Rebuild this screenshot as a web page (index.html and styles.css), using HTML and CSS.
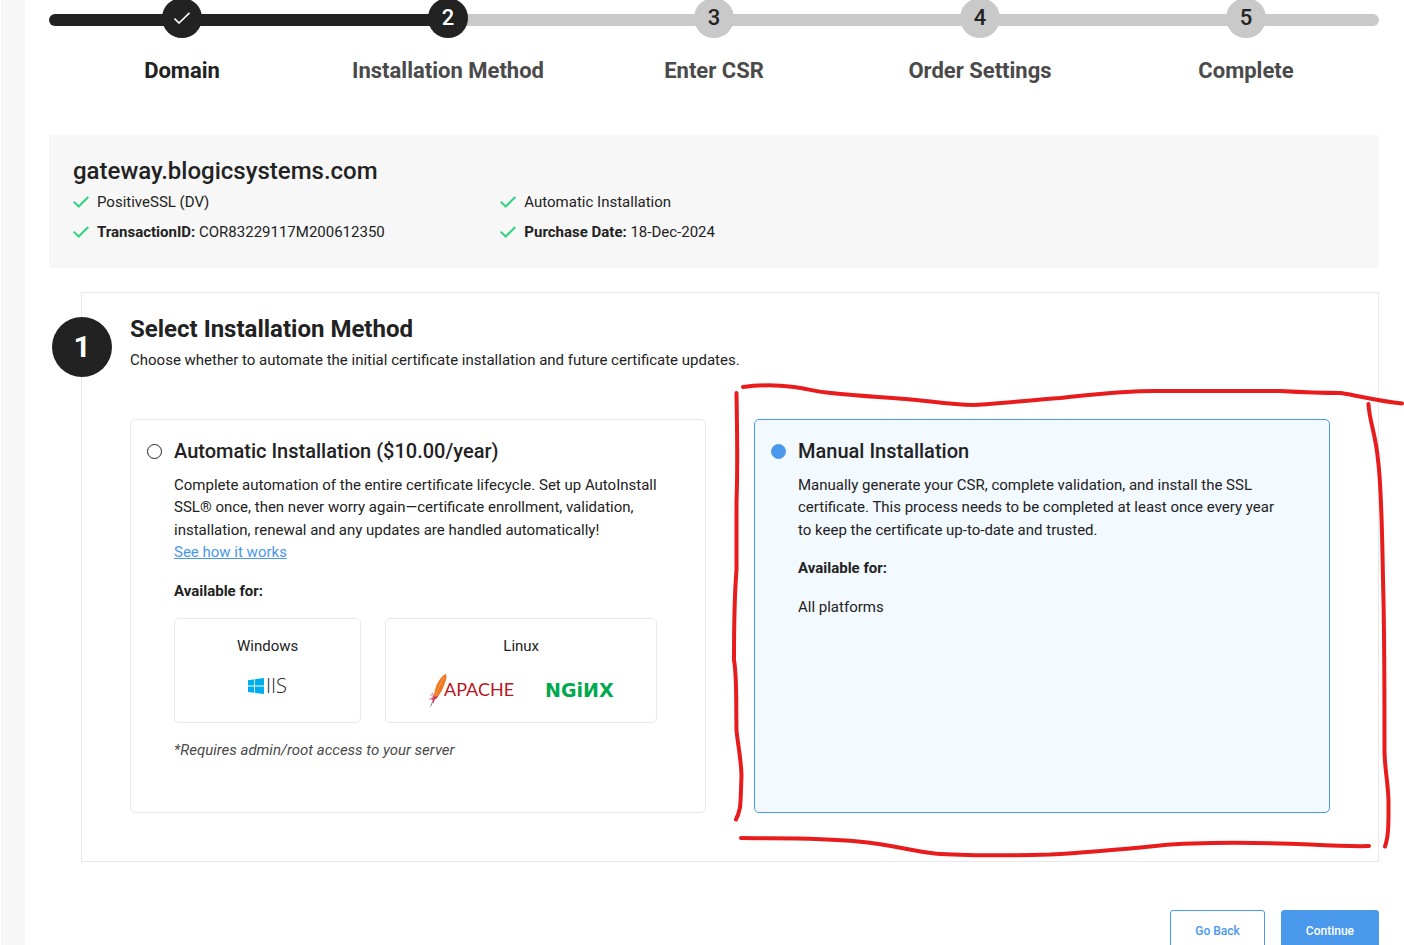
FILE: index.html
```html
<!DOCTYPE html>
<html lang="en">
<head>
  <meta charset="UTF-8" />
  <title>Select Installation Method</title>
  <meta name="viewport" content="width=device-width, initial-scale=1" />
  <link rel="stylesheet" href="styles.css">
</head>
<body>
  <main class="page">

    <ol class="stepper">
      <li class="step done">
        <span class="step-dot">
          <svg width="16" height="12" viewBox="0 0 16 12" aria-hidden="true"><path d="M.5 6.500 5 11 15.500 .8" fill="none" stroke="#fff" stroke-width="1.6"/></svg>
        </span>
        <span class="step-label">Domain</span>
      </li>
      <li class="step active"><span class="step-dot">2</span><span class="step-label">Installation Method</span></li>
      <li class="step"><span class="step-dot">3</span><span class="step-label">Enter CSR</span></li>
      <li class="step"><span class="step-dot">4</span><span class="step-label">Order Settings</span></li>
      <li class="step"><span class="step-dot">5</span><span class="step-label">Complete</span></li>
    </ol>

    <section class="summary">
      <h2>gateway.blogicsystems.com</h2>
      <ul class="summary-list">
        <li><svg class="tick" viewBox="0 0 16 12"><path d="M.7 5.600 5.700 10.500 15.300 1"/></svg><span>PositiveSSL (DV)</span></li>
        <li><svg class="tick" viewBox="0 0 16 12"><path d="M.7 5.600 5.700 10.500 15.300 1"/></svg><span>Automatic Installation</span></li>
        <li><svg class="tick" viewBox="0 0 16 12"><path d="M.7 5.600 5.700 10.500 15.300 1"/></svg><span><b>TransactionID:</b> COR83229117M200612350</span></li>
        <li><svg class="tick" viewBox="0 0 16 12"><path d="M.7 5.600 5.700 10.500 15.300 1"/></svg><span><b>Purchase Date:</b> 18-Dec-2024</span></li>
      </ul>
    </section>

    <form>
      <section class="method">
        <span class="method-number">1</span>
        <h1>Select Installation Method</h1>
        <p>Choose whether to automate the initial certificate installation and future certificate updates.</p>

        <div class="options">
          <div class="option">
            <input type="radio" name="method" id="auto" value="auto" />
            <div class="option-body">
              <label for="auto">Automatic Installation ($10.00/year)</label>
              <p>Complete automation of the entire certificate lifecycle. Set up AutoInstall SSL® once, then never worry again—certificate enrollment, validation, installation, renewal and any updates are handled automatically!<br /><a href="#">See how it works</a></p>
              <p><b>Available for:</b></p>
              <div class="platforms">
                <div class="platform">
                  <span>Windows</span>
                  <div class="logos">
                    <svg width="40" height="24" viewBox="0 0 40 24" role="img" aria-label="IIS">
                      <path fill="#00adef" d="M0 6.200 6.200 5.300V11.500H0zM7 5.200 16 4V11.500H7zM0 12.400H6.200V18.800L0 17.900zM7 12.400H16V20.100L7 18.900z"/>
                      <text class="iis" x="18" y="19">IIS</text>
                    </svg>
                  </div>
                </div>
                <div class="platform wide">
                  <span>Linux</span>
                  <div class="logos">
                    <svg width="85" height="33" viewBox="0 0 85 33" role="img" aria-label="Apache">
                      <path fill="#ee7b23" d="M17 0C13.500 1 9 7 7 12.500 5.500 17 4.800 20 5 23.500L9 22.500C12.500 18 15 12.500 16.500 7.500 17.600 4 18 1.500 17 0z"/>
                      <path fill="none" stroke="#f6a45c" stroke-width=".7" d="M15.500 3C11.500 9 8.500 15 6.800 22"/>
                      <path fill="#cf2848" d="M4.200 20.500 6 23 9.500 21.500 7.500 24.500 6 25 4 30 3.500 25.500 1.500 24 4.500 23.500z"/>
                      <path fill="none" stroke="#cf5b80" stroke-width=".8" d="M1 20 4.500 23M0 25H5M3 18.500 5 23"/>
                      <path fill="none" stroke="#7a6a9a" stroke-width=".9" d="M4 27 1.500 32.500"/>
                      <text class="apache" x="15" y="22">APACHE</text>
                    </svg>
                    <svg width="68" height="33" viewBox="0 0 68 33" role="img" aria-label="Nginx">
                      <text class="nginx" x="-1" y="23">NGiИX</text>
                    </svg>
                  </div>
                </div>
              </div>
              <p class="note">*Requires admin/root access to your server</p>
            </div>
          </div>

          <div class="option selected">
            <input type="radio" name="method" id="manual" value="manual" checked />
            <div class="option-body">
              <label for="manual">Manual Installation</label>
              <p>Manually generate your CSR, complete validation, and install the SSL certificate. This process needs to be completed at least once every year to keep the certificate up-to-date and trusted.</p>
              <p><b>Available for:</b></p>
              <p>All platforms</p>
            </div>
            <!-- hand-drawn marker around the card -->
            <svg class="marker" viewBox="754 419 576 394" preserveAspectRatio="none" aria-hidden="true">
              <path d="M743 387C758 385 778 385 794 387 808 389 817 392 831 393 858 396 881 397 906 399 930 401 950 405 974 405 1000 404 1030 400 1060 398 1090 395 1120 391 1155 391H1280C1298 392 1320 393 1341 393 1360 396 1378 401 1402 403.500"/>
              <path d="M736.500 393C737 430 738 465 736.500 500V570C734 600 734 630 734 660 737 675 736 705 736.500 730 738 745 741 758 741.500 775 741 787 741 797 740 807 739 812 738 815 736 819"/>
              <path d="M1368.500 404C1369 420 1376 435 1378 460 1382 490 1382 540 1383.500 600 1384.500 650 1384.500 700 1384.500 752 1385 770 1388 782 1388.500 800 1388.500 820 1389 835 1385 846"/>
              <path d="M741 837.500C780 838 820 837 858 841 890 844 910 850 935 853 970 856 1010 855 1050 854 1090 852 1120 849 1160 845 1200 841 1270 842 1310 844 1330 845 1350 846 1369 845.500"/>
            </svg>
          </div>
        </div>
      </section>

      <div class="actions">
        <button type="button" class="btn">Go Back</button>
        <button type="submit" class="btn primary">Continue</button>
      </div>
    </form>

  </main>
</body>
</html>
```
FILE: styles.css
```css
* {
  box-sizing: border-box;
}

body {
  margin: 0;
  height: 100vh;
  overflow: hidden;
  background: #fff;
  color: #222;
  font-family: Roboto, "Liberation Sans", sans-serif;
  font-size: 15px;
  line-height: 1.5;
}

h1, h2, p, ul, ol {
  margin: 0;
  padding: 0;
}

ul, ol {
  list-style: none;
}

b {
  font-weight: 700;
}

a {
  color: #4a98eb;
}

.page {
  margin-left: 1px;
  padding: 0 25px 24px 24px;
  border-left: 24px solid #f7f7f7;
}

/* progress steps */
.stepper {
  position: relative;
  display: flex;
  margin-top: -2px;
}

.stepper::before {
  content: "";
  position: absolute;
  top: 16px;
  left: 0;
  right: 0;
  height: 12px;
  border-radius: 6px;
  background: linear-gradient(90deg, #222 30%, #c9c9c9 30%);
}

.step {
  position: relative;
  flex: 1;
  display: flex;
  flex-direction: column;
  align-items: center;
  gap: 16px;
}

.step-dot {
  display: flex;
  align-items: center;
  justify-content: center;
  width: 40px;
  height: 40px;
  padding-bottom: 2px;
  border-radius: 50%;
  background: #c9c9c9;
  font-size: 22px;
  font-weight: 500;
}

.done .step-dot,
.active .step-dot {
  background: #222;
  color: #fff;
}

.done .step-dot {
  padding-bottom: 0;
}

.step-label {
  font-size: 22px;
  line-height: 33px;
  font-weight: 700;
  color: #4a4a4a;
}

.done .step-label {
  color: #222;
}

/* order summary */
.summary {
  margin-top: 48px;
  padding: 20px 24px 21px;
  background: #f7f7f7;
}

.summary h2 {
  font-size: 24px;
  line-height: 32px;
  font-weight: 500;
}

.summary-list {
  display: grid;
  grid-template-columns: repeat(3, 1fr);
  line-height: 30px;
}

.summary-list li {
  display: flex;
  align-items: center;
  gap: 8px;
}

.summary-list li:nth-child(odd) {
  grid-column: 1;
}

.tick {
  width: 16px;
  height: 12px;
  fill: none;
  stroke: #2fd47f;
  stroke-width: 2;
}

/* method card */
.method {
  position: relative;
  margin: 24px 0 0 32px;
  padding: 18px 48px 48px;
  border: 1px solid #e8e8e8;
}

.method-number {
  position: absolute;
  top: 24px;
  left: -30px;
  width: 60px;
  height: 60px;
  border-radius: 50%;
  background: #222;
  color: #fff;
  font-size: 30px;
  line-height: 60px;
  font-weight: 700;
  text-align: center;
}

.method h1 {
  margin-bottom: 2px;
  font-size: 24px;
  line-height: 36px;
  font-weight: 700;
}

.options {
  display: grid;
  grid-template-columns: 1fr 1fr;
  gap: 48px;
  margin-top: 47px;
}

.option {
  position: relative;
  display: flex;
  align-items: flex-start;
  gap: 12px;
  padding: 16px 48px 51px 16px;
  border: 1px solid #e8e8e8;
  border-radius: 5px;
}

.option.selected {
  background: #f2f9ff;
  border-color: #4a98eb;
}

.option input {
  appearance: none;
  flex: none;
  width: 15px;
  height: 15px;
  margin: 8px 0 0;
  border: 1px solid #222;
  border-radius: 50%;
  background: #fff;
}

.option input:checked {
  background: #4a98eb;
  border-color: #4a98eb;
}

.option-body {
  flex: 1;
  display: flex;
  flex-direction: column;
  gap: 16px;
}

.option-body label {
  margin-bottom: -8px;
  font-size: 20px;
  line-height: 30px;
  font-weight: 500;
}

.platforms {
  display: flex;
  gap: 24px;
}

.platform {
  flex: 187;
  padding: 16px 0 15px;
  border: 1px solid #e8e8e8;
  border-radius: 5px;
  text-align: center;
}

.platform.wide {
  flex: 272;
}

.logos {
  display: flex;
  justify-content: center;
  gap: 32px;
  margin-top: 16px;
}

.logos svg {
  overflow: visible;
}

.iis {
  font: 300 20px "Open Sans", sans-serif;
  fill: #222;
}

.apache {
  font: 400 18px Lato, sans-serif;
  fill: #b8161e;
}

.nginx {
  font: 700 19px "DejaVu Sans", sans-serif;
  fill: #00a94f;
}

.note {
  color: #4a4a4a;
  font-style: italic;
}

.marker {
  position: absolute;
  top: -1px;
  left: -1px;
  width: calc(100% + 2px);
  height: calc(100% + 2px);
  overflow: visible;
  pointer-events: none;
  fill: none;
  stroke: #e81c1c;
  stroke-width: 4;
  stroke-linecap: round;
}

/* buttons */
.actions {
  display: flex;
  justify-content: flex-end;
  gap: 16px;
  margin-top: 48px;
}

.btn {
  padding: 11px 24px;
  border: 1px solid #4a98eb;
  border-radius: 3px;
  background: #fff;
  color: #4a98eb;
  font: 500 12px/18px Roboto, sans-serif;
  cursor: pointer;
}

.btn.primary {
  background: #4a98eb;
  color: #fff;
}
```
